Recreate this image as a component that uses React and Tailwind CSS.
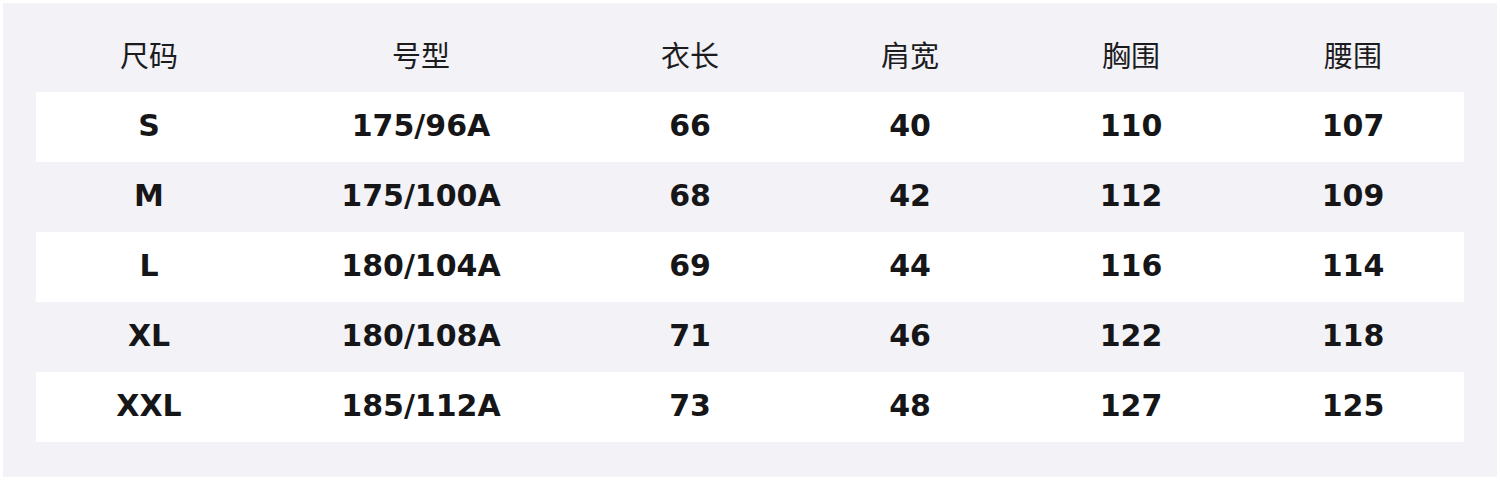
import React from "react";

const headers = ["尺码", "号型", "衣长", "肩宽", "胸围", "腰围"];
const rows = [
  ["S", "175/96A", "66", "40", "110", "107"],
  ["M", "175/100A", "68", "42", "112", "109"],
  ["L", "180/104A", "69", "44", "116", "114"],
  ["XL", "180/108A", "71", "46", "122", "118"],
  ["XXL", "185/112A", "73", "48", "127", "125"],
];
const widths = ["w-[226px]", "w-[318px]", "w-[220px]", "w-[220px]", "w-[222px]", "w-[222px]"];

export default function App() {
  return (
    <div className="w-[1500px] h-[480px] bg-white p-[3px]">
      <div className="h-[474px] bg-[#f2f2f7] px-[33px] pt-[19px]">
        <div className="flex h-[70px] items-center pb-[6px]">
          {headers.map((h, i) => (
            <div
              key={h}
              className={`${widths[i]} text-center text-[29px] text-[#1c1c1e] font-['Noto_Sans_CJK_SC',sans-serif] leading-none`}
            >
              {h}
            </div>
          ))}
        </div>
        {rows.map((r, ri) => (
          <div
            key={ri}
            className={`flex h-[70px] items-center pb-[2px] ${ri % 2 === 0 ? "bg-white" : "bg-[#f2f2f7]"}`}
          >
            {r.map((c, i) => (
              <div
                key={i}
                className={`${widths[i]} text-center text-[30px] font-bold text-[#161618] font-['DejaVu_Sans',sans-serif] leading-none`}
              >
                {c}
              </div>
            ))}
          </div>
        ))}
      </div>
    </div>
  );
}
